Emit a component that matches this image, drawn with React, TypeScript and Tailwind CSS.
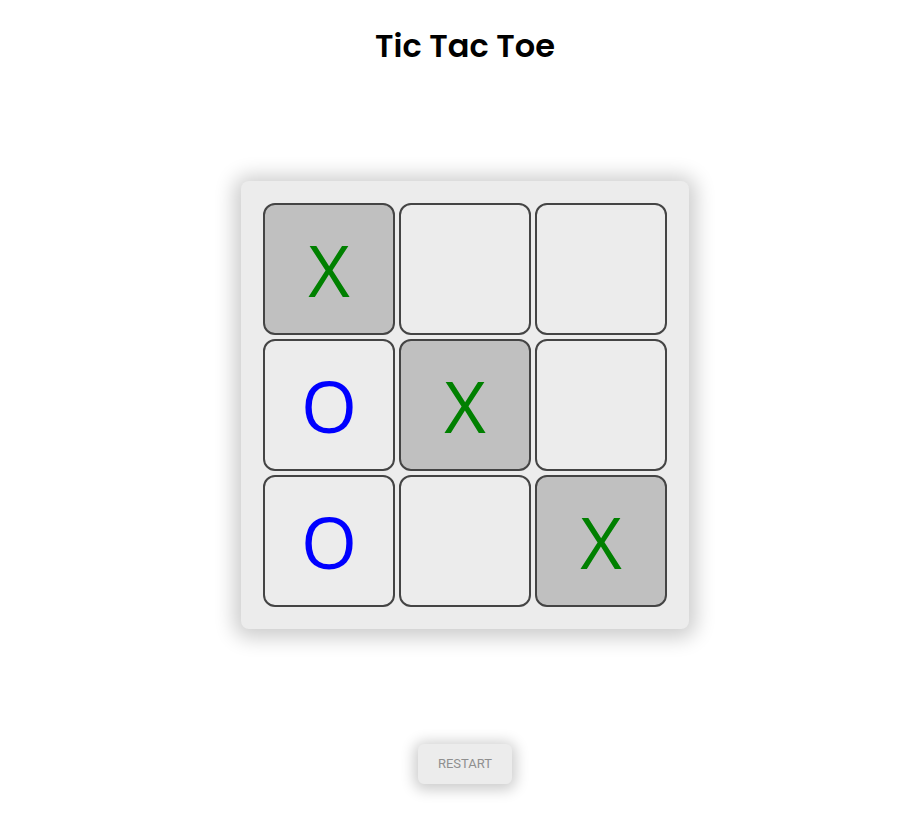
const board = ["X", "", "", "O", "X", "", "O", "", "X"];
const winning = [0, 4, 8];

export default function App() {
  return (
    <div className="min-h-screen bg-white flex flex-col items-center pl-[19px]">
      <h1 className="mt-[26px] text-[32px] leading-[40px] font-semibold text-black font-['Poppins','Inter',sans-serif]">
        Tic Tac Toe
      </h1>

      {/* Board */}
      <div className="mt-[115px] bg-[#ececec] rounded-lg p-[22px] shadow-[0_2px_20px_7px_rgba(0,0,0,0.2)]">
        <div className="grid grid-cols-[repeat(3,132px)] gap-1">
          {board.map((v, i) => (
            <div
              key={i}
              className={`h-[132px] rounded-xl border-2 border-[#444] flex items-center justify-center font-['Open_Sans',sans-serif] text-[72px] leading-none ${
                winning.includes(i) ? "bg-[#c0c0c0]" : "bg-[#ececec]"
              } ${v === "X" ? "text-[#008000]" : "text-[#0000ff]"}`}
            >
              {v}
            </div>
          ))}
        </div>
      </div>

      <button className="mt-[115px] w-[94px] h-10 rounded-md bg-[#ececec] text-[#8f8f8f] text-[13px] font-['Roboto',sans-serif] uppercase shadow-[0_2px_14px_4px_rgba(0,0,0,0.2)]">
        Restart
      </button>
    </div>
  );
}
